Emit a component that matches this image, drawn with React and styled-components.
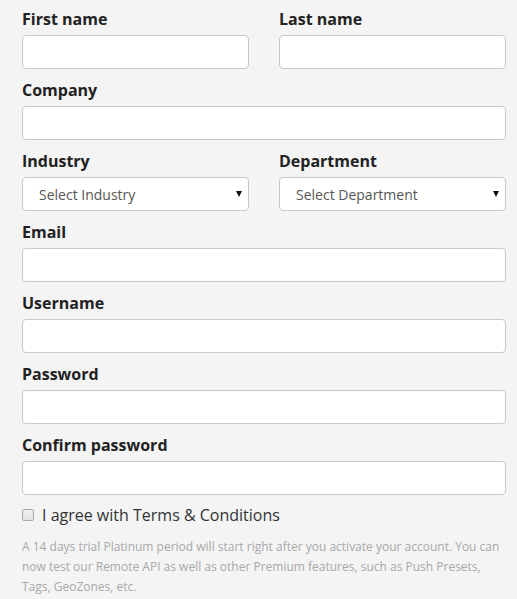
import React from 'react';
import styled, { createGlobalStyle } from 'styled-components';

const GlobalStyle = createGlobalStyle`
  html, body {
    margin: 0;
    padding: 0;
    background: #f4f4f4;
  }
  * {
    box-sizing: border-box;
  }
`;

const Form = styled.form`
  padding: 8px 11px 0 22px;
  font-family: 'Open Sans', 'Noto Sans', sans-serif;
  color: #222;
`;

const Row = styled.div`
  display: grid;
  grid-template-columns: ${props => props.split ? '1fr 1fr' : '1fr'};
  column-gap: 30px;
`;

const Field = styled.div`
  display: flex;
  flex-direction: column;
  margin-bottom: 10px;
`;

const Label = styled.label`
  font-size: 16px;
  font-weight: 700;
  line-height: 22px;
  color: #222;
  margin-bottom: 5px;
`;

const Input = styled.input`
  height: 34px;
  width: 100%;
  border: 1px solid #c8c8c8;
  border-radius: 4px;
  background: #fff;
  padding: 0 12px;
  font-family: inherit;
  font-size: 14px;
  outline: none;
`;

const SelectWrap = styled.div`
  position: relative;
`;

const Select = styled.select`
  appearance: none;
  -webkit-appearance: none;
  height: 34px;
  width: 100%;
  border: 1px solid #c8c8c8;
  border-radius: 4px;
  background: #fff;
  padding: 0 24px 0 16px;
  font-family: inherit;
  font-size: 14px;
  color: #555;
  outline: none;
`;

const Arrow = styled.span`
  position: absolute;
  right: 7px;
  top: 14px;
  width: 0;
  height: 0;
  border-left: 3px solid transparent;
  border-right: 3px solid transparent;
  border-top: 6px solid #111;
  pointer-events: none;
`;

const Agree = styled.label`
  display: flex;
  align-items: center;
  gap: 8px;
  font-size: 16px;
  line-height: 22px;
  color: #333;
  margin-top: -1px;
`;

const Check = styled.input`
  appearance: none;
  -webkit-appearance: none;
  margin: 0;
  width: 12px;
  height: 12px;
  border: 1px solid #a9a9a9;
  border-radius: 2px;
  background: linear-gradient(#f0f0f0, #e2e2e2);
  &:checked {
    background: #4a90d9;
    border-color: #3a78b8;
  }
`;

const Note = styled.p`
  margin: 11px 0 0;
  font-size: 12px;
  line-height: 20px;
  color: #a8a8a8;
`;

function TextField({ label, type = 'text' }) {
  return (
    <Field>
      <Label>{label}</Label>
      <Input type={type} />
    </Field>
  );
}

function SelectField({ label, placeholder }) {
  return (
    <Field>
      <Label>{label}</Label>
      <SelectWrap>
        <Select defaultValue="">
          <option value="">{placeholder}</option>
        </Select>
        <Arrow />
      </SelectWrap>
    </Field>
  );
}

export default function App() {
  return (
    <>
      <GlobalStyle />
      <Form onSubmit={e => e.preventDefault()}>
        <Row split>
          <TextField label="First name" />
          <TextField label="Last name" />
        </Row>
        <Row>
          <TextField label="Company" />
        </Row>
        <Row split>
          <SelectField label="Industry" placeholder="Select Industry" />
          <SelectField label="Department" placeholder="Select Department" />
        </Row>
        <Row>
          <TextField label="Email" type="email" />
        </Row>
        <Row>
          <TextField label="Username" />
        </Row>
        <Row>
          <TextField label="Password" type="password" />
        </Row>
        <Row>
          <TextField label="Confirm password" type="password" />
        </Row>
        <Agree>
          <Check type="checkbox" />
          I agree with Terms &amp; Conditions
        </Agree>
        <Note>
          A 14 days trial Platinum period will start right after you activate your account. You can
          now test our Remote API as well as other Premium features, such as Push Presets,
          Tags, GeoZones, etc.
        </Note>
      </Form>
    </>
  );
}
